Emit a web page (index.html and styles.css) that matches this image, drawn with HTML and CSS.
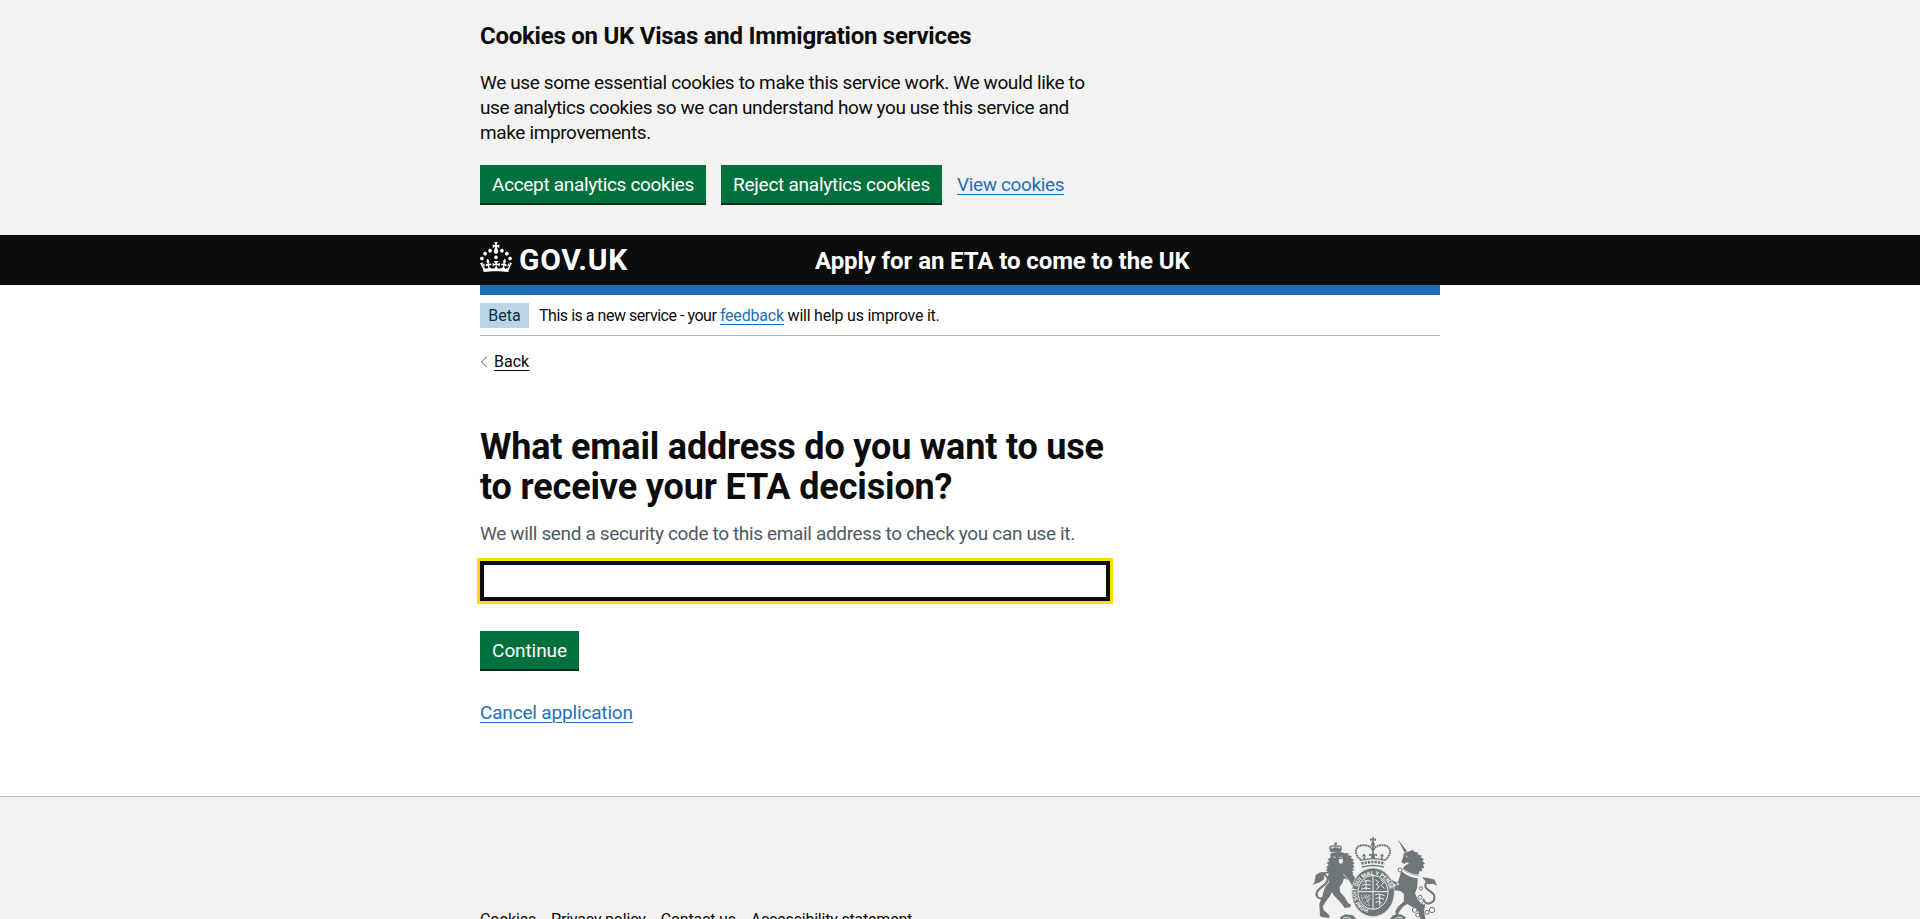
FILE: index.html
```html
<!DOCTYPE html>
<html lang="en">
<head>
    <meta charset="UTF-8">
    <meta name="viewport" content="width=device-width, initial-scale=1.0">
    <title>What email address do you want to use to receive your ETA decision?</title>
    <link rel="stylesheet" href="styles.css">
</head>
<body>
    <div class="cookie-banner">
        <div class="container">
            <h2>Cookies on UK Visas and Immigration services</h2>
            <p>We use some essential cookies to make this service work. We would like to<br>
                <span class="line-tight">use analytics cookies so we can understand how you use this service and</span><br>
                make improvements.</p>
            <div class="button-group">
                <button class="button accept" type="button">Accept analytics cookies</button>
                <button class="button reject" type="button">Reject analytics cookies</button>
                <a class="link view-link" href="#">View cookies</a>
            </div>
        </div>
    </div>

    <header class="header">
        <div class="container header-row">
            <a class="logo" href="#">
                <svg width="32" height="30" viewBox="0 0 32 30" fill="currentColor" aria-hidden="true">
                    <path d="M22.6 10.4c-1 .4-2-.1-2.4-1-.4-.9.1-2 1-2.4.9-.4 2 .1 2.4 1s-.1 2-1 2.4m-5.9 6.7c-.9.4-2-.1-2.4-1-.4-.9.1-2 1-2.4.9-.4 2 .1 2.4 1s-.1 2-1 2.4m10.8-3.7c-1 .4-2-.1-2.4-1-.4-.9.1-2 1-2.4.9-.4 2 .1 2.4 1s0 2-1 2.4m3.3 4.8c-1 .4-2-.1-2.4-1-.4-.9.1-2 1-2.4.9-.4 2 .1 2.4 1s-.1 2-1 2.4M17 4.7l2.3 1.2V2.5l-2.3.7-.2-.2.9-3h-3.4l.9 3-.2.2c-.1.1-2.3-.7-2.3-.7v3.4L15 4.7c.1.1.1.2.2.2l-1.3 4c-.1.2-.1.4-.1.6 0 1.1.8 2 1.9 2.2h.7c1-.2 1.9-1.1 1.9-2.1 0-.2 0-.4-.1-.6l-1.3-4c-.1-.2 0-.2.1-.3m-7.6 5.7c.9.4 2-.1 2.4-1 .4-.9-.1-2-1-2.4-.9-.4-2 .1-2.4 1s0 2 1 2.4m-5 3c.9.4 2-.1 2.4-1 .4-.9-.1-2-1-2.4-.9-.4-2 .1-2.4 1s.1 2 1 2.4m-3.2 4.8c.9.4 2-.1 2.4-1 .4-.9-.1-2-1-2.4-.9-.4-2 .1-2.4 1s0 2 1 2.4m14.8 11c4.4 0 8.6.3 12.3.8 1.1-4.5 2.4-7 3.7-8.8l-2.5-.9c.2 1.3.3 1.9 0 2.7-.4-.4-.8-1.1-1.1-2.3l-1.2 4c.7-.5 1.3-.8 2-.9-1.1 2.5-2.6 3.1-3.5 3-1.1-.2-1.7-1.2-1.5-2.1.3-1.2 1.5-1.5 2.1-.1 1.1-2.3-.8-3-2-2.3 1.9-1.9 2.1-3.5.6-5.6-2.1 1.6-2.1 3.2-1.2 5.5-1.2-1.4-3.2-.6-2.5 1.6.9-1.4 2.1-.5 1.9.8-.2 1.1-1.7 2.1-3.5 1.9-2.7-.2-2.9-2.1-2.9-3.6.7-.1 1.9.5 2.9 1.9l.4-4.3c-1.1 1.1-2.1 1.4-3.2 1.4.4-1.2 2.1-3 2.1-3h-5.4s1.7 1.9 2.1 3c-1.1 0-2.1-.2-3.2-1.4l.4 4.3c1-1.4 2.2-2 2.9-1.9-.1 1.5-.2 3.4-2.9 3.6-1.9.2-3.4-.8-3.5-1.9-.2-1.3 1-2.2 1.9-.8.7-2.3-1.2-3-2.5-1.6.9-2.2.9-3.9-1.2-5.5-1.5 2-1.3 3.7.6 5.6-1.2-.7-3.1 0-2 2.3.6-1.4 1.8-1.1 2.1.1.2.9-.3 1.9-1.5 2.1-.9.2-2.4-.5-3.5-3 .6 0 1.2.3 2 .9l-1.2-4c-.3 1.1-.7 1.9-1.1 2.3-.3-.8-.2-1.4 0-2.7l-2.9.9C1.3 23 2.6 25.5 3.7 30c3.7-.5 7.9-.8 12.3-.8"/>
                </svg>
                <span>GOV.UK</span>
            </a>
            <a class="service-name" href="#">Apply for an ETA to come to the UK</a>
        </div>
    </header>

    <div class="container">
        <div class="header-bar"></div>
        <div class="phase-banner">
            <strong class="tag">Beta</strong>
            <span class="phase-text">This is a new service - your <a class="link" href="#">feedback</a><span class="phase-end"> will help us improve it.</span></span>
        </div>

        <a class="back-link" href="#">
            <svg width="8" height="12" viewBox="0 0 8 12" fill="none" stroke="#505a5f" aria-hidden="true"><path d="M6.8 .7 1.5 6l5.3 5.3"/></svg>
            <span>Back</span>
        </a>

        <main class="main">
            <form>
                <h1><label for="email">What email address do you want to use<br><span class="line-wide">to receive your ETA decision?</span></label></h1>
                <div class="hint">We will send a security code to this email address to check you can use it.</div>
                <input class="input" id="email" name="email" type="email">
                <button class="button continue" type="button">Continue</button>
            </form>
            <a class="link cancel-link" href="#">Cancel application</a>
        </main>
    </div>

    <footer class="footer">
        <div class="container footer-row">
            <ul class="footer-links">
                <li><a href="#">Cookies</a></li>
                <li><a href="#">Privacy policy</a></li>
                <li><a href="#">Contact us</a></li>
                <li><a href="#">Accessibility statement</a></li>
            </ul>
            <!-- Royal coat of arms -->
            <svg class="crest" width="125" height="102" viewBox="66 171 375 306" aria-hidden="true">
                <defs>
                    <path id="garter" d="M249 389a50 52 0 0 1 0-104a50 52 0 0 1 0 104"/>
                </defs>
                <!-- crown -->
                <g fill="none" stroke="#6f777b">
                    <path stroke-width="6" stroke-dasharray="6 1.5" d="M213 240C190 222 195 198 215 196c18-2 30 4 32 14M285 240c23-18 18-42-2-44-18-2-30 4-32 14"/>
                    <path stroke-width="5" d="M249 198v40"/>
                    <path stroke-width="4" d="M212 241q37-10 74 0M216 261q33-9 66 0"/>
                    <path stroke-width="8" stroke-dasharray="7 3" d="M214 251q35-10 70 0"/>
                </g>
                <g fill="#6f777b">
                    <path d="M246 171h6l-1 6 7-2v8l-7-2 2 8h-8l2-8-7 2v-8l7 2z"/>
                    <circle cx="249" cy="194" r="6"/>
                    <path d="M219 239l2-10-6 1 7-10 7 10-5-1 2 9zM242 237l2-11-7 3v-8l8 2 4-7 4 7 8-2v8l-7-3 2 11zM272 238l2-9-5 1 7-10 7 10-6-1 2 10z"/>
                </g>
                <!-- lion -->
                <g fill="#6f777b">
                    <path d="M123 217q-10-14-3-19 8-4 14-1l-1-8q5-5 8 0l-1 8q8-3 14 2 6 6-4 19-13-3-27-1z"/>
                    <path d="M121 221q15-8 34-4l8 3 14 0-4 5 13 4-4 5 10 5-5 5 7 6-6 4 6 7-7 3 7 7-8 1 5 9-5-1 8 12 6 12-4 16-9-1-10-18-15-6-5 14-8 12 1 14 14 17 10 17 9 5-2 8-17 2-10-14-20-21-9-12-5 11-13 17-8 14 2 12 17 14v9l-19-2-9-4-2-37 9-22 8-28 12-15-4-12 3-14-8 1 5-9-6 1 6-10-5-1 8-8-6-6 8-4-5-7 8-3z"/>
                    <path d="M66 315l7-7 4-23 14-8 22-1-10 8-1 14-12 9z"/>
                </g>
                <path fill="none" stroke="#6f777b" stroke-width="6" d="M101 282c18 10 14 24 0 34-18 13-27 24-18 35 9 9 23 3 32-7"/>
                <path fill="none" stroke="#f3f2f1" stroke-width="2" d="M120 204q17-6 35 0M128 198v8M148 198v8M130 230l8 3M148 233l9-2"/>
                <path fill="#f3f2f1" d="M147 238l12-2-1 12-7 4-5-6z"/>
                <path fill="none" stroke="#f3f2f1" stroke-width="2" d="M160 282l16 18"/>
                <!-- unicorn -->
                <g fill="#6f777b">
                    <path d="M323 177l28 36-7 5z"/>
                    <path d="M342 219l19-6 7-4 5 6 12 3-2 5 13 4-4 5 10 6-5 4 8 9-6 3 4 10-8 1 2 9-8-1-5 15q-26-2-46-20l6-10 13-8-8-3-6 5-9-6 5-14z"/>
                    <path d="M334 272q21 19 49 23l-1 27-7 18 7 16 12 15 11 5-3 18 6 30-8 14-13-2 5-9-5-30-19-15-16-10-13 8-12 16-5 17 5 20-15 3-11-9 11-5 5-20-1-9 9-14 16-14 1-22-9-9-14-3-9 2 2 10-10 3-6-9 6-15 18-4-10-9-15-3-5 9-9-3-1-12 12-7 13 6 18 11z"/>
                    <path d="M441 317l-12-6-15 2-9-11-9-10 18 2 20 5z"/>
                </g>
                <path fill="none" stroke="#6f777b" stroke-width="6" d="M410 307c-10 13-1 20 11 27 16 10 16 25 4 33-15 9-25-2-25-11"/>
                <path fill="none" stroke="#f3f2f1" stroke-width="2" d="M335 263q22 20 52 22M332 271q22 20 50 22"/>
                <path fill="none" stroke="#f3f2f1" stroke-width="4" stroke-dasharray="4 4" d="M334 267q22 19 51 22"/>
                <path fill="none" stroke="#f3f2f1" stroke-width="2" d="M347 228l6 2"/>
                <g fill="#f3f2f1" stroke="#6f777b" stroke-width="3">
                    <circle cx="330" cy="270" r="6"/>
                    <circle cx="323" cy="312" r="5"/>
                    <circle cx="393" cy="325" r="5"/>
                    <circle cx="390" cy="352" r="6"/>
                    <circle cx="401" cy="370" r="5"/>
                    <circle cx="426" cy="390" r="8"/>
                    <circle cx="411" cy="397" r="6"/>
                    <circle cx="374" cy="390" r="7"/>
                    <circle cx="383" cy="405" r="6"/>
                </g>
                <!-- garter and shield -->
                <ellipse cx="249" cy="337" rx="64" ry="73" fill="#6f777b" stroke="#f3f2f1" stroke-width="2"/>
                <text class="crest-text"><textPath href="#garter" startOffset="4%">HONI SOIT QUI MAL Y PENSE</textPath></text>
                <ellipse cx="249" cy="337" rx="45" ry="51" fill="#6f777b" stroke="#f3f2f1" stroke-width="3"/>
                <g fill="none" stroke="#f3f2f1">
                    <path stroke-width="3" d="M249 287v100M205 335h88"/>
                    <path stroke-width="3" d="M218 307q8-9 24-3M214 318q9-8 28-3M213 328q11-7 28-2M228 300v30M257 300l9 7-7 6 9 7-9 8M273 299l8 9-8 8 10 10M256 345q9-6 28 2M257 356q9-6 25 2M257 367q8-6 18 2M269 343v34"/>
                    <path stroke-width="1.5" d="M214 343q0 31 26 34M221 343l17 31M228 343l10 24M234 343l6 16M216 356l26-10M224 369l18-15"/>
                </g>
                <!-- motto ribbon -->
                <path fill="#6f777b" d="M150 412l16-9 23 3 12 14 48 10 48-10 12-14 23-3 16 9-14 30q-85 34-170 0z"/>
                <path fill="none" stroke="#f3f2f1" stroke-width="3" d="M160 414q14-6 24 4M314 418q10-10 24-4"/>
            </svg>
        </div>
    </footer>
    <script>
        document.getElementById("email").focus({ preventScroll: true });
    </script>
</body>
</html>
```

FILE: styles.css
```css
* {
    box-sizing: border-box;
}

html {
    background: #f3f2f1;
    overflow: hidden;
}

body {
    margin: 0;
    height: 919px;
    overflow: hidden;
    background: white;
    color: #0b0c0c;
    font-family: Roboto, Arial, sans-serif;
    font-size: 19px;
    line-height: 25px;
}

.container {
    width: 960px;
    margin: 0 auto;
}

.link {
    color: #1d70b8;
    text-decoration: underline;
    text-decoration-thickness: 1px;
    text-underline-offset: 3px;
}

/* Cookie banner */
.cookie-banner {
    height: 235px;
    padding-top: 21px;
    background: #f3f2f1;
}

.cookie-banner h2 {
    margin: 0 0 19px;
    font-size: 24px;
    line-height: 30px;
    letter-spacing: -0.25px;
}

.cookie-banner p {
    margin: 0 0 20px;
    letter-spacing: -0.37px;
}

.line-tight {
    letter-spacing: -0.42px;
}

.button-group {
    display: flex;
    align-items: center;
    gap: 15px;
}

/* Buttons */
.button {
    display: block;
    height: 38px;
    padding: 2px 12px 0;
    border: none;
    border-radius: 0;
    background: #00703c;
    box-shadow: 0 2px 0 #002d18;
    color: white;
    font-family: inherit;
    font-size: 19px;
    line-height: 36px;
    white-space: nowrap;
}

.accept {
    width: 226px;
    letter-spacing: -0.33px;
}

.reject {
    width: 221px;
    letter-spacing: -0.26px;
}

.continue {
    width: 99px;
    letter-spacing: -0.1px;
}

.view-link {
    letter-spacing: -0.37px;
}

/* Header */
.header {
    height: 50px;
    background: #0b0c0c;
    color: white;
}

.header a {
    color: white;
    text-decoration: none;
}

.header-row {
    display: flex;
    height: 50px;
}

.logo {
    display: flex;
    width: 335px;
    padding-top: 7px;
    gap: 7px;
    font-size: 30px;
    font-weight: 700;
    line-height: 35px;
    letter-spacing: 0.7px;
}

.service-name {
    padding-top: 11px;
    font-size: 24px;
    font-weight: 700;
    line-height: 30px;
    letter-spacing: -0.09px;
}

.header-bar {
    height: 10px;
    background: #1d70b8;
}

/* Phase banner */
.phase-banner {
    display: flex;
    align-items: center;
    gap: 10px;
    height: 41px;
    border-bottom: 1px solid #b1b4b6;
    font-size: 16px;
    line-height: 20px;
}

.tag {
    width: 49px;
    height: 25px;
    background: #bbd4ea;
    color: #0c2d4a;
    font-weight: 400;
    line-height: 25px;
    text-align: center;
}

.phase-text {
    padding-top: 2px;
    letter-spacing: -0.47px;
}

.phase-text .link {
    letter-spacing: -0.2px;
}

.phase-end {
    letter-spacing: -0.23px;
}

.back-link {
    display: flex;
    align-items: center;
    gap: 6px;
    height: 20px;
    margin-top: 16px;
    color: #0b0c0c;
    font-size: 16px;
    line-height: 20px;
    text-decoration: underline;
    text-decoration-thickness: 1px;
    text-underline-offset: 3px;
}

/* Main content */
.main {
    height: 424px;
    padding-top: 55px;
}

.main h1 {
    margin: 0 0 14px;
    font-size: 36px;
    line-height: 40px;
    letter-spacing: -0.19px;
}

.line-wide {
    letter-spacing: -0.14px;
}

.hint {
    margin-bottom: 15px;
    color: #505a5f;
    letter-spacing: -0.35px;
}

.input {
    display: block;
    width: 630px;
    height: 40px;
    margin-bottom: 30px;
    padding: 5px;
    border: 4px solid #0b0c0c;
    border-radius: 0;
    outline: 3px solid #ffdd00;
    background: white;
    caret-color: transparent;
    font-family: inherit;
    font-size: 19px;
}

.cancel-link {
    display: inline-block;
    margin-top: 31px;
    letter-spacing: -0.17px;
}

/* Footer */
.footer {
    height: 123px;
    padding-top: 40px;
    border-top: 1px solid #b1b4b6;
    background: #f3f2f1;
    overflow: hidden;
}

.footer-row {
    display: flex;
    justify-content: space-between;
    align-items: flex-start;
}

.footer-links {
    display: flex;
    gap: 15px;
    margin: 0;
    padding: 73px 0 0;
    list-style: none;
    font-size: 16px;
    line-height: 20px;
    letter-spacing: -0.2px;
}

.footer-links a {
    color: #0b0c0c;
    text-underline-offset: 3px;
}

.crest {
    margin-right: 3px;
}

.crest-text {
    fill: #f3f2f1;
    font-size: 17px;
    font-weight: 700;
    letter-spacing: -0.3px;
}
```
